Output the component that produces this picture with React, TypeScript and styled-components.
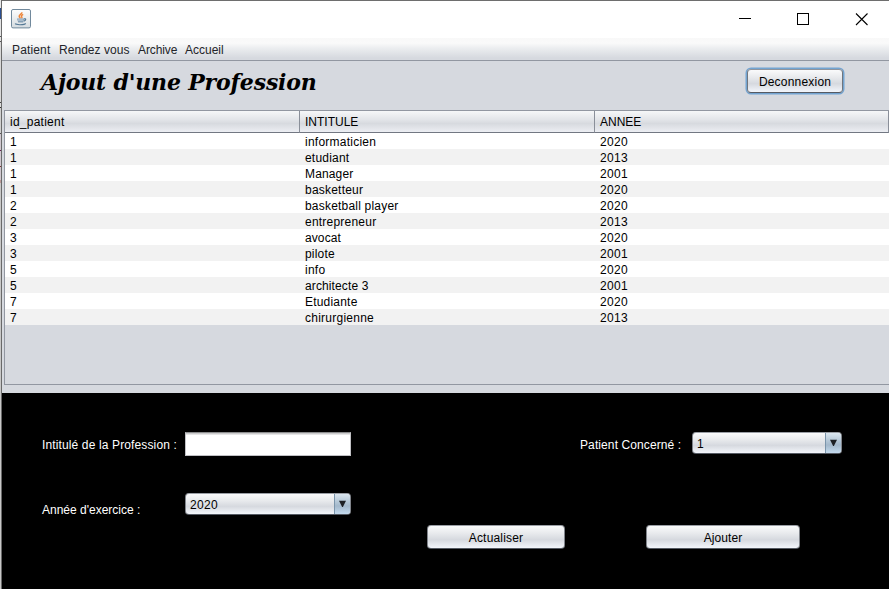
import React from "react";
import styled, { createGlobalStyle } from "styled-components";

const Global = createGlobalStyle`
  * { box-sizing: border-box; }
  body { margin: 0; background: #d6d9df; overflow: hidden; }
`;

const Screen = styled.div`
  display: flex;
  width: 889px;
  height: 589px;
  overflow: hidden;
  font: 12px/16px "Liberation Sans", Arial, sans-serif;
  color: #000;
`;

const Backdrop = styled.div`
  flex: 0 0 2px;
  border-right: 1px solid #6a6a6a;
  background: linear-gradient(#e8e8e8 0 8px, #2b4f91 8px 19px, #e4e4e4 19px 36px, #555 36px 37px, #e4e4e4 37px 41px, #555 41px 42px, #d8d8d8 42px 102px, #444 102px 103px, #ddd 103px 107px, #333 107px 108px, #d0d0d0 108px 133px, #555 133px 134px, #d0c8d0 134px 150px, #625 150px 151px, #d0c8d0 151px 166px, #733 166px 167px, #d0c8d0 167px 180px, #b99 180px 183px, #c8c8c8 183px);
`;

const Window = styled.div`
  flex: 1;
  min-width: 0;
  display: flex;
  flex-direction: column;
  border-top: 1px solid #6e6e6e;
  background: #d6d9df;
`;

const TitleBar = styled.div`
  display: flex;
  justify-content: space-between;
  height: 37px;
  padding: 8px 20px 0 9px;
  background: #fff;
`;

const WindowControls = styled.div`
  display: flex;
  gap: 46px;
  padding: 4px 1px 0 0;
`;

const MenuBar = styled.div`
  display: flex;
  height: 23px;
  padding: 4px 0 0 10px;
  border-bottom: 1px solid #9297a1;
  background: linear-gradient(#f8f8f8 0, #fafafa 5px, #eceef0 10px, #d6d9df 20px);
`;

const MenuItem = styled.span<{ $w: number; $ls?: number }>`
  flex: 0 0 ${(p) => p.$w}px;
  white-space: nowrap;
  color: #232429;
  letter-spacing: ${(p) => p.$ls ?? 0}px;
`;

const Header = styled.header`
  display: flex;
  justify-content: space-between;
  height: 49px;
  padding: 8px 46px 0 39px;
`;

const Heading = styled.h1`
  margin: -1px 0 0;
  font: italic bold 22px/28px "DejaVu Serif", serif;
  letter-spacing: -0.17px;
  white-space: nowrap;
`;

const NimbusButton = styled.button<{ $w: number; $focus?: boolean; $ls?: number }>`
  width: ${(p) => p.$w}px;
  height: 24px;
  padding: 1px 0 0;
  border: 1px solid;
  border-color: ${(p) => (p.$focus ? "#8f949d #70757d #555a63" : "#9a9ea5 #80848b #555a63")};
  border-radius: 4px;
  background: linear-gradient(#fafafb 0, #e7e9ec 35%, #d6d9df 62%, #f3f6fb 100%);
  box-shadow: ${(p) => (p.$focus ? "0 0 0 1.5px #73a4d1" : "none")};
  font: inherit;
  letter-spacing: ${(p) => p.$ls ?? 0}px;
  color: #000;
`;

const TableFrame = styled.div`
  height: 275px;
  margin-left: 2px;
  border: 1px solid #9297a1;
  border-right: 0;
`;

const Table = styled.table`
  width: 884px;
  table-layout: fixed;
  border-collapse: separate;
  border-spacing: 0;
`;

const HeadCell = styled.th<{ $w: number; $ls?: number }>`
  width: ${(p) => p.$w}px;
  height: 22px;
  padding: 0 0 0 5px;
  border-right: 1px solid #8a8f99;
  border-bottom: 1px solid #727782;
  background: linear-gradient(#f6f7f8 0, #e3e5e9 40%, #d7dadf 60%, #eceef3 100%);
  text-align: left;
  font-weight: normal;
  letter-spacing: ${(p) => p.$ls ?? 0}px;
`;

const Row = styled.tr<{ $alt: boolean }>`
  height: 16px;
  background: ${(p) => (p.$alt ? "#f2f2f2" : "#fff")};
`;

const Cell = styled.td<{ $ls?: number }>`
  height: 16px;
  padding: 2px 0 0 5px;
  line-height: 14px;
  letter-spacing: ${(p) => p.$ls ?? 0}px;
`;

const Form = styled.form`
  flex: 1;
  display: flex;
  flex-direction: column;
  margin-top: 8px;
  padding: 39px 0 0 40px;
  background: #000;
`;

const Line = styled.div<{ $h: number }>`
  display: flex;
  align-items: flex-start;
  height: ${(p) => p.$h}px;
`;

const Label = styled.label<{ $w: number; $top: number; $ls?: number }>`
  flex: 0 0 ${(p) => p.$w}px;
  padding-top: ${(p) => p.$top}px;
  color: #fff;
  white-space: nowrap;
  letter-spacing: ${(p) => p.$ls ?? 0}px;
`;

const TextInput = styled.input`
  width: 166px;
  height: 24px;
  margin-right: 229px;
  padding: 0 6px;
  border: 1px solid #c0c0c4;
  border-top-color: #8d8e8f;
  outline: 0;
  background: linear-gradient(#cbcbcc 0 1px, #fff 2px);
`;

const Combo = styled.div<{ $w: number }>`
  display: flex;
  justify-content: space-between;
  width: ${(p) => p.$w}px;
  height: 22px;
  border: 1px solid;
  border-color: #9a9ea5 #80848b #555a63;
  border-radius: 4px;
  overflow: hidden;
  background: linear-gradient(#fafafb 0, #e7e9ec 35%, #d6d9df 62%, #f3f6fb 100%);
`;

const ComboValue = styled.span`
  padding: 3px 0 0 4px;
  letter-spacing: 0.3px;
`;

const ComboArrow = styled.span`
  display: flex;
  width: 16px;
  padding: 6px 0 0 4px;
  border-left: 1px solid #7b95ab;
  background: linear-gradient(#dce7f0 0, #b3c6d6 40%, #a3b8cb 60%, #c4dbef 100%);
`;

const Actions = styled.div`
  display: flex;
  gap: 81px;
  padding-left: 385px;
`;

const JavaIcon = () => (
  <svg width="20" height="20" viewBox="0 0 20 20" fill="none">
    <defs>
      <linearGradient id="tile" x1="0" y1="0" x2="0" y2="1">
        <stop offset="0" stopColor="#fdfdfd" />
        <stop offset="1" stopColor="#d5dce0" />
      </linearGradient>
    </defs>
    <rect x=".5" y=".5" width="19" height="18.4" rx="1.5" fill="url(#tile)" stroke="#71899c" />
    <path d="M10.8 3.3C11.3 5 7.9 5.8 8.2 7.4c.1.8 1 1.2 1.2 2M12.2 5.4c-1.7.8-2.1 1.5-1.5 2.4.4.6.2 1.1-.3 1.4" stroke="#ee8538" strokeWidth="1.5" />
    <path d="M6 9.6h7.2l-1 3.8H7.2z" fill="#86a0b5" />
    <path d="M7 11h5" stroke="#e3eaf0" strokeWidth=".7" />
    <path d="M13 9.9c2.3-.5 2.3 1.4-.2 2.3M4.2 14.6c.8 1.6 9.2 1.5 10.5-.3" stroke="#547895" strokeWidth="1.2" />
  </svg>
);

const Arrow = () => (
  <svg width="8" height="8" viewBox="0 0 8 8">
    <path d="M0 .7h7L3.9 7h-.8z" fill="#1d2024" />
  </svg>
);

const Select = ({ width, value }: { width: number; value: string }) => (
  <Combo $w={width}>
    <ComboValue>{value}</ComboValue>
    <ComboArrow><Arrow /></ComboArrow>
  </Combo>
);

const rows: [string, string, string, number][] = [
  ["1", "informaticien", "2020", 0.24],
  ["1", "etudiant", "2013", 0.2],
  ["1", "Manager", "2001", 0.15],
  ["1", "basketteur", "2020", 0.22],
  ["2", "basketball player", "2020", 0.2],
  ["2", "entrepreneur", "2013", 0.22],
  ["3", "avocat", "2020", 0.1],
  ["3", "pilote", "2001", 0.2],
  ["5", "info", "2020", 0.25],
  ["5", "architecte 3", "2001", 0.12],
  ["7", "Etudiante", "2020", 0.2],
  ["7", "chirurgienne", "2013", 0.25],
];

export default function App() {
  return (
    <>
      <Global />
      <Screen>
        <Backdrop />
        <Window>
          <TitleBar>
            <JavaIcon />
            <WindowControls>
              <svg width="12" height="13" shapeRendering="crispEdges"><path d="M0 5h12v1H0z" /></svg>
              <svg width="12" height="13" shapeRendering="crispEdges"><path d="M.5.5h11v11H.5z" fill="none" stroke="#000" /></svg>
              <svg width="13" height="13"><path d="M1 .5l11.5 11.5M12.5.5L1 12" stroke="#000" strokeWidth="1.1" /></svg>
            </WindowControls>
          </TitleBar>
          <MenuBar>
            <MenuItem $w={47} $ls={0.15}>Patient</MenuItem>
            <MenuItem $w={79} $ls={0.04}>Rendez vous</MenuItem>
            <MenuItem $w={47} $ls={-0.1}>Archive</MenuItem>
            <MenuItem $w={50}>Accueil</MenuItem>
          </MenuBar>
          <Header>
            <Heading>Ajout d'une Profession</Heading>
            <NimbusButton type="button" $w={96} $focus $ls={0.2}>Deconnexion</NimbusButton>
          </Header>
          <TableFrame>
            <Table>
              <thead>
                <tr>
                  <HeadCell $w={295} $ls={0.25}>id_patient</HeadCell>
                  <HeadCell $w={295}>INTITULE</HeadCell>
                  <HeadCell $w={294}>ANNEE</HeadCell>
                </tr>
              </thead>
              <tbody>
                {rows.map(([id, title, year, spacing], i) => (
                  <Row key={i} $alt={i % 2 === 1}>
                    <Cell>{id}</Cell>
                    <Cell $ls={spacing}>{title}</Cell>
                    <Cell $ls={0.3}>{year}</Cell>
                  </Row>
                ))}
              </tbody>
            </Table>
          </TableFrame>
          <Form>
            <Line $h={61}>
              <Label $w={143} $top={5} $ls={0.13}>Intitulé de la Profession :</Label>
              <TextInput />
              <Label $w={112} $top={5} $ls={0.1}>Patient Concerné :</Label>
              <Select width={150} value="1" />
            </Line>
            <Line $h={32}>
              <Label $w={143} $top={9}>Année d'exercice :</Label>
              <Select width={166} value="2020" />
            </Line>
            <Actions>
              <NimbusButton type="button" $w={138} $ls={0.18}>Actualiser</NimbusButton>
              <NimbusButton type="button" $w={154} $ls={0.05}>Ajouter</NimbusButton>
            </Actions>
          </Form>
        </Window>
      </Screen>
    </>
  );
}
